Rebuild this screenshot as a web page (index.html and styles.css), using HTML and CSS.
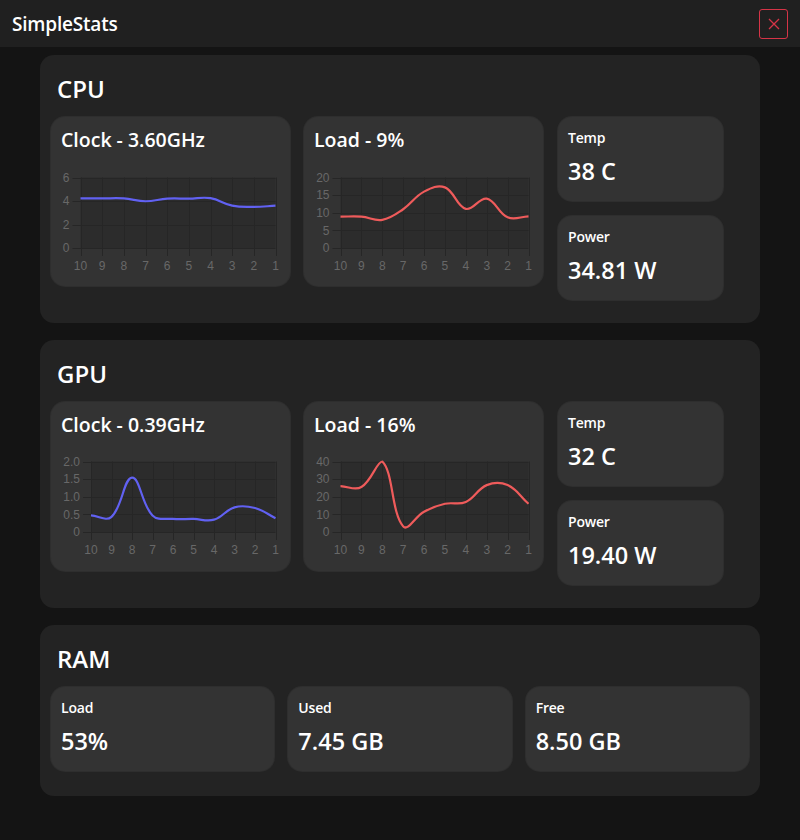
FILE: index.html
```html
<!DOCTYPE html>
<html lang="en">
<head>
<meta charset="utf-8">
<title>SimpleStats</title>
<link rel="stylesheet" href="styles.css">
</head>
<body>
<header class="titlebar">
  <h1 class="app-title">SimpleStats</h1>
  <button class="close-btn" aria-label="Close">
    <svg width="12" height="12" viewBox="0 0 12 12"><path d="M1 1 L11 11 M11 1 L1 11" stroke="#d63447" stroke-width="1.3" fill="none"/></svg>
  </button>
</header>
<main class="content">
  <section class="panel">
    <h2 class="panel-title">CPU</h2>
    <div class="row">
      <div class="chart-card"><h3 class="chart-title">Clock - 3.60GHz</h3><svg class="chart" id="cpu-clock" viewBox="0 35 239 134"></svg></div>
      <div class="chart-card"><h3 class="chart-title">Load - 9%</h3><svg class="chart" id="cpu-load" viewBox="0 35 239 134"></svg></div>
      <div class="stat-col">
        <div class="stat"><div class="stat-label">Temp</div><div class="stat-value">38 C</div></div>
        <div class="stat"><div class="stat-label">Power</div><div class="stat-value">34.81 W</div></div>
      </div>
    </div>
  </section>
  <section class="panel">
    <h2 class="panel-title">GPU</h2>
    <div class="row">
      <div class="chart-card"><h3 class="chart-title">Clock - 0.39GHz</h3><svg class="chart" id="gpu-clock" viewBox="0 35 239 134"></svg></div>
      <div class="chart-card"><h3 class="chart-title">Load - 16%</h3><svg class="chart" id="gpu-load" viewBox="0 35 239 134"></svg></div>
      <div class="stat-col">
        <div class="stat"><div class="stat-label">Temp</div><div class="stat-value">32 C</div></div>
        <div class="stat"><div class="stat-label">Power</div><div class="stat-value">19.40 W</div></div>
      </div>
    </div>
  </section>
  <section class="panel panel-ram">
    <h2 class="panel-title">RAM</h2>
    <div class="ram-row">
      <div class="stat"><div class="stat-label">Load</div><div class="stat-value">53%</div></div>
      <div class="stat"><div class="stat-label">Used</div><div class="stat-value">7.45 GB</div></div>
      <div class="stat"><div class="stat-label">Free</div><div class="stat-value">8.50 GB</div></div>
    </div>
  </section>
</main>
<script src="charts.js"></script>
</body>
</html>
```
FILE: styles.css
```css
* { box-sizing: border-box; }
html, body { margin: 0; padding: 0; }
body {
  background: #141414;
  color: #ffffff;
  font-family: "Open Sans", "Noto Sans", sans-serif;
  width: 800px;
  height: 840px;
  overflow: hidden;
}
.titlebar {
  height: 47px;
  background: #202020;
  display: flex;
  align-items: center;
  justify-content: space-between;
  padding: 0 12px 0 12px;
}
.app-title {
  margin: 0;
  font-size: 19px;
  font-weight: 600;
  letter-spacing: -0.2px;
  line-height: 24px;
}
.close-btn {
  width: 29px;
  height: 30px;
  border: 1px solid #d63447;
  border-radius: 3px;
  background: transparent;
  display: flex;
  align-items: center;
  justify-content: center;
  padding: 0;
}
.close-btn svg { display: block; }
.content {
  display: flex;
  flex-direction: column;
  gap: 17px;
  padding: 8px 40px 0 40px;
}
.panel {
  background: #232323;
  border-radius: 14px;
  padding: 0 11px 23px 11px;
}
.panel-ram { padding-bottom: 25px; }
.panel-title {
  margin: 0;
  padding: 18px 0 0 6px;
  font-size: 24px;
  font-weight: 600;
  line-height: 32px;
  height: 62px;
}
.row {
  display: flex;
  gap: 14px;
  align-items: flex-start;
}
.chart-card {
  width: 239px;
  height: 169px;
  background: #333333;
  border-radius: 14px;
  box-shadow: 0 0 0 1px #2e2e2e;
  overflow: hidden;
}
.chart-title {
  margin: 0;
  padding: 11px 0 0 10px;
  font-size: 19.5px;
  font-weight: 600;
  line-height: 24px;
  height: 35px;
}
.chart {
  display: block;
  width: 239px;
  height: 134px;
}
.stat-col {
  display: flex;
  flex-direction: column;
  gap: 15px;
  width: 165px;
  margin-left: 1px;
}
.stat {
  height: 84px;
  background: #333333;
  border-radius: 14px;
  box-shadow: 0 0 0 1px #2e2e2e;
  padding: 12px 10px 0 10px;
}
.stat-label {
  font-size: 14px;
  font-weight: 600;
  line-height: 18px;
  letter-spacing: -0.2px;
}
.stat-value {
  margin-top: 8px;
  font-size: 23.5px;
  font-weight: 600;
  line-height: 32px;
}
.ram-row {
  display: grid;
  grid-template-columns: repeat(3, 1fr);
  gap: 14px;
}
```
FILE: charts.js
```js
(function () {
  var NS = 'http://www.w3.org/2000/svg';
  var charts = [
    { id: 'cpu-clock', data: [4.22, 4.22, 4.22, 3.98, 4.2, 4.2, 4.24, 3.6, 3.5, 3.6], max: 6,
      ticks: [0, 2, 4, 6], labels: ['0', '2', '4', '6'], left: 29.5, top: 60.5, bottom: 131, color: '#6161f2' },
    { id: 'cpu-load', data: [8.9, 8.9, 8.0, 11, 16, 17.2, 11.1, 14, 8.7, 9], max: 20,
      ticks: [0, 5, 10, 15, 20], labels: ['0', '5', '10', '15', '20'], left: 36.5, top: 60.5, bottom: 131, color: '#ef5b5b' },
    { id: 'gpu-clock', data: [0.47, 0.43, 1.54, 0.47, 0.37, 0.37, 0.35, 0.7, 0.68, 0.39], max: 2,
      ticks: [0, 0.5, 1, 1.5, 2], labels: ['0', '0.5', '1.0', '1.5', '2.0'], left: 40, top: 59.5, bottom: 130, color: '#6161f2' },
    { id: 'gpu-load', data: [26, 25.5, 40, 3.2, 11.5, 16, 17, 26.6, 26.6, 16], max: 40,
      ticks: [0, 10, 20, 30, 40], labels: ['0', '10', '20', '30', '40'], left: 36.5, top: 59.5, bottom: 130, color: '#ef5b5b' }
  ];
  var right = 224.5;
  var xLabels = ['10', '9', '8', '7', '6', '5', '4', '3', '2', '1'];

  function el(name, attrs, text) {
    var e = document.createElementNS(NS, name);
    for (var k in attrs) e.setAttribute(k, attrs[k]);
    if (text !== undefined) e.textContent = text;
    return e;
  }

  charts.forEach(function (c) {
    var svg = document.getElementById(c.id);
    var L = c.left, T = c.top, B = c.bottom;
    var step = (right - L) / 9;
    svg.appendChild(el('rect', { x: L, y: T, width: right - L, height: B - T, fill: '#2c2c2c' }));
    var g = el('g', { stroke: '#262626', 'stroke-width': 1, fill: 'none' });
    for (var i = 0; i < 10; i++) {
      var x = Math.round(L + i * step) + 0.5;
      g.appendChild(el('line', { x1: x, y1: T, x2: x, y2: B + 8 }));
    }
    c.ticks.forEach(function (t) {
      var y = Math.round(B - (t / c.max) * (B - T)) + 0.5;
      g.appendChild(el('line', { x1: L - 8, y1: y, x2: right, y2: y }));
    });
    svg.appendChild(g);
    var tg = el('g', { fill: '#686868', 'font-family': '"Liberation Sans", Arial, sans-serif', 'font-size': 12 });
    c.ticks.forEach(function (t, idx) {
      var y = B - (t / c.max) * (B - T);
      tg.appendChild(el('text', { x: L - 11, y: y + 4.3, 'text-anchor': 'end' }, c.labels[idx]));
    });
    xLabels.forEach(function (lab, i2) {
      tg.appendChild(el('text', { x: L + i2 * step, y: B + 22, 'text-anchor': 'middle' }, lab));
    });
    svg.appendChild(tg);

    var pts = c.data.map(function (v, i3) {
      return { x: L + i3 * step, y: B - (v / c.max) * (B - T) };
    });
    var tension = 0.4;
    var cps = pts.map(function (p, i4) {
      var p0 = pts[i4 - 1] || p, p2 = pts[i4 + 1] || p;
      var d01 = Math.hypot(p.x - p0.x, p.y - p0.y);
      var d12 = Math.hypot(p2.x - p.x, p2.y - p.y);
      var s01 = d01 / (d01 + d12 || 1), s12 = d12 / (d01 + d12 || 1);
      var fa = tension * s01, fb = tension * s12;
      var prev = { x: p.x - fa * (p2.x - p0.x), y: p.y - fa * (p2.y - p0.y) };
      var next = { x: p.x + fb * (p2.x - p0.x), y: p.y + fb * (p2.y - p0.y) };
      [prev, next].forEach(function (q) {
        q.y = Math.max(T, Math.min(B, q.y));
      });
      return { prev: prev, next: next };
    });
    var d = 'M' + pts[0].x.toFixed(2) + ' ' + pts[0].y.toFixed(2);
    for (var j = 1; j < pts.length; j++) {
      var a = cps[j - 1].next, b = cps[j].prev, p = pts[j];
      d += ' C' + a.x.toFixed(2) + ' ' + a.y.toFixed(2) + ' ' + b.x.toFixed(2) + ' ' + b.y.toFixed(2) + ' ' + p.x.toFixed(2) + ' ' + p.y.toFixed(2);
    }
    svg.appendChild(el('path', { d: d, fill: 'none', stroke: c.color, 'stroke-width': 2.2, 'stroke-linejoin': 'round' }));
  });
})();
```
